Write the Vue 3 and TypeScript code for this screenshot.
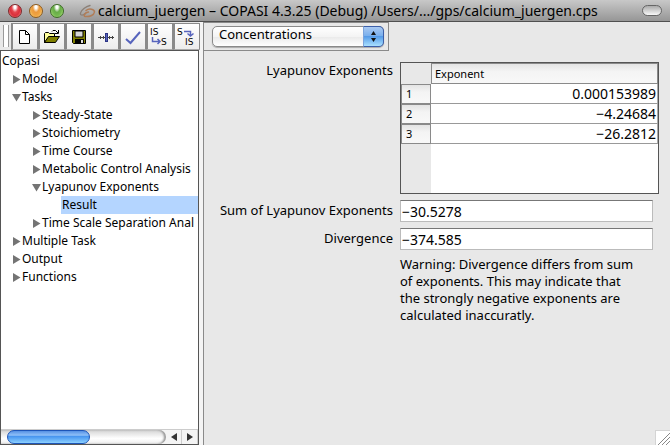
<script setup lang="ts">
import { ref } from 'vue'

interface TreeNode {
  label: string
  depth: number
  state: 'open' | 'closed' | 'leaf'
}

const nodes: TreeNode[] = [
  { label: 'Copasi', depth: 0, state: 'leaf' },
  { label: 'Model', depth: 1, state: 'closed' },
  { label: 'Tasks', depth: 1, state: 'open' },
  { label: 'Steady-State', depth: 2, state: 'closed' },
  { label: 'Stoichiometry', depth: 2, state: 'closed' },
  { label: 'Time Course', depth: 2, state: 'closed' },
  { label: 'Metabolic Control Analysis', depth: 2, state: 'closed' },
  { label: 'Lyapunov Exponents', depth: 2, state: 'open' },
  { label: 'Result', depth: 3, state: 'leaf' },
  { label: 'Time Scale Separation Anal', depth: 2, state: 'closed' },
  { label: 'Multiple Task', depth: 1, state: 'closed' },
  { label: 'Output', depth: 1, state: 'closed' },
  { label: 'Functions', depth: 1, state: 'closed' },
]

const selected = ref('Result')
const framework = ref('Concentrations')
const exponents = ['0.000153989', '−4.24684', '−26.2812']
const sum = ref('−30.5278')
const divergence = ref('−374.585')
</script>

<template>
  <div class="window">
    <header class="titlebar">
      <div class="lights">
        <button class="light red" aria-label="Close"></button>
        <button class="light amber" aria-label="Minimize"></button>
        <button class="light green" aria-label="Zoom"></button>
      </div>
      <svg class="doc-icon" width="17" height="14" viewBox="0 0 17 14" fill="none" stroke-linecap="round">
        <path d="M11 1.500C7 2.500 2 6 1.500 9C1 12 4.500 11.500 6.500 9.500" stroke="#8b8078" stroke-width="1.400" />
        <path d="M7 6.500C10 4 15.500 5 15.500 8C15 11.500 10 13 6.500 12.500C3.500 12 6 8.500 9.500 8" stroke="#b07d58" stroke-width="1.500" />
      </svg>
      <h1 class="title">calcium_juergen – COPASI 4.3.25 (Debug) /Users/.../gps/calcium_juergen.cps</h1>
      <button class="pill" aria-label="Toggle toolbar"></button>
    </header>

    <div class="body">
      <aside class="side">
        <div class="toolbar">
          <span class="grip"></span>
          <button class="tool" aria-label="New">
            <svg width="24" height="24" viewBox="0 0 24 24">
              <path d="M6.500 5.500H12.500L16.500 9.500V18.500H6.500Z" fill="#fff" stroke="#000" />
              <path d="M12.500 5.500V9.500H16.500" fill="none" stroke="#000" />
            </svg>
          </button>
          <button class="tool" aria-label="Open">
            <svg width="24" height="24" viewBox="0 0 24 24">
              <path d="M4.500 17.500V8.500L5.500 7.500H8.500L9.500 8.500H14.500V11.500H9.500Z" fill="#ffff9c" stroke="#000" />
              <path d="M4.500 17.500L8.500 11.500H19.500L15.500 17.500Z" fill="#808000" stroke="#000" />
              <path d="M12 6.500L13 5.500H15.500L18 8M18.500 5V8.500H15" fill="none" stroke="#000" />
            </svg>
          </button>
          <button class="tool" aria-label="Save">
            <svg width="24" height="24" viewBox="0 0 24 24">
              <path d="M5.500 5.500H18.500V18.500H6.500L5.500 17.500Z" fill="#808000" stroke="#000" />
              <path d="M8 6H16V12H8Z" fill="#d8d8d8" stroke="#000" />
              <path d="M8 14H17V18H8Z" fill="#000" />
              <path d="M14 15H16V18H14Z" fill="#ddd" />
            </svg>
          </button>
          <button class="tool" aria-label="Sliders">
            <svg width="24" height="24" viewBox="0 0 24 24">
              <path d="M4 12.500H20M6.500 11V14M9.500 11V14M15.500 11V14M18.500 11V14" stroke="#444" />
              <path d="M11 8H14V17H11Z" fill="#2b3488" />
              <path d="M12 9H13V16H12Z" fill="#5964b4" />
            </svg>
          </button>
          <button class="tool" aria-label="Check model">
            <svg width="24" height="24" viewBox="0 0 24 24">
              <path d="M5 14L9.500 18L19 7" fill="none" stroke="#5764bd" stroke-width="2" />
            </svg>
          </button>
          <button class="tool" aria-label="Update initial state">
            <svg width="24" height="24" viewBox="0 0 24 24">
              <text x="2" y="10" class="glyph">IS</text>
              <text x="13" y="20" class="glyph">S</text>
              <path d="M4.500 12V16.500H12M9.500 14L12 16.500L9.500 19" fill="none" stroke="#5764bd" stroke-width="1.500" />
            </svg>
          </button>
          <button class="tool" aria-label="Use current state">
            <svg width="24" height="24" viewBox="0 0 24 24">
              <text x="2" y="10" class="glyph">S</text>
              <text x="10" y="20" class="glyph">IS</text>
              <path d="M9 6.500H15.500V10.500M12.500 8.500L15.500 11L18.500 8.500" fill="none" stroke="#5764bd" stroke-width="1.500" />
            </svg>
          </button>
        </div>

        <nav class="tree" aria-label="Model tree">
          <ul class="nodes">
            <li v-for="node in nodes" :key="node.label" :class="['node', 'd' + node.depth]">
              <svg v-if="node.state === 'closed'" class="twist" width="9" height="10" viewBox="0 0 9 10">
                <path d="M1 1L8.500 5.500L1 10Z" fill="#747474" />
              </svg>
              <svg v-else-if="node.state === 'open'" class="twist" width="9" height="10" viewBox="0 0 9 10">
                <path d="M0 2H9L4.500 9.500Z" fill="#747474" />
              </svg>
              <button :class="['node-label', { active: selected === node.label }]" @click="selected = node.label">
                {{ node.label }}
              </button>
            </li>
          </ul>
          <div class="scroll">
            <div class="track"><span class="thumb"></span></div>
            <button class="step" aria-label="Scroll left">
              <svg width="6" height="8" viewBox="0 0 6 8"><path d="M6 0V8L0 4Z" fill="#333" /></svg>
            </button>
            <button class="step" aria-label="Scroll right">
              <svg width="6" height="8" viewBox="0 0 6 8"><path d="M0 0V8L6 4Z" fill="#333" /></svg>
            </button>
          </div>
        </nav>
      </aside>

      <main class="main">
        <div class="picker">
          <div class="popup">
            <select v-model="framework" class="select" aria-label="Framework">
              <option>Concentrations</option>
              <option>Particle Numbers</option>
            </select>
            <span class="cap">
              <svg width="7" height="13" viewBox="0 0 7 13">
                <path d="M3.500 1L6 5H1ZM3.500 12L6 8H1Z" fill="#111" />
              </svg>
            </span>
          </div>
        </div>

        <form class="form" @submit.prevent>
          <span id="exp-label" class="label">Lyapunov Exponents</span>
          <div class="frame">
            <table class="grid" aria-labelledby="exp-label">
              <thead>
                <tr>
                  <td class="corner"></td>
                  <th class="head" scope="col">Exponent</th>
                </tr>
              </thead>
              <tbody>
                <tr v-for="(value, i) in exponents" :key="i">
                  <th class="row-head" scope="row">{{ i + 1 }}</th>
                  <td class="cell">{{ value }}</td>
                </tr>
              </tbody>
            </table>
          </div>

          <label class="label field-label" for="sum">Sum of Lyapunov Exponents</label>
          <input id="sum" v-model="sum" class="field" type="text" readonly />

          <label class="label field-label" for="divergence">Divergence</label>
          <input id="divergence" v-model="divergence" class="field" type="text" readonly />

          <p class="warning">
            Warning: Divergence differs from sum of exponents. This may indicate that the strongly negative
            exponents are calculated inaccuratly.
          </p>
        </form>

        <svg class="resize" width="15" height="15" viewBox="0 0 15 15">
          <path d="M0 0H15V15H0Z" fill="#d4d4d4" />
          <path d="M1 1H15V15H1Z" fill="#fff" />
          <path d="M3 15L15 3M7 15L15 7M11 15L15 11" stroke="#888" />
        </svg>
      </main>
    </div>
  </div>
</template>

<style>
body {
  margin: 0;
  background: #e8e8e8;
}
</style>

<style scoped>
.window {
  display: flex;
  flex-direction: column;
  height: 100vh;
  overflow: hidden;
  font-family: "Noto Sans", "Open Sans", sans-serif;
  font-size: 13px;
  color: #000;
  background: #e8e8e8;
}
.window *,
.window {
  box-sizing: border-box;
}
button {
  padding: 0;
  border: 0;
  font: inherit;
  color: inherit;
  background: none;
}
.titlebar {
  display: flex;
  flex: none;
  align-items: center;
  height: 22px;
  padding: 0 8px;
  border-bottom: 1px solid #505050;
  background: linear-gradient(#c8c8c8, #969696);
}
.lights {
  display: flex;
  gap: 7px;
  width: 71px;
}
.light {
  width: 14px;
  height: 14px;
  border: 1px solid #555;
  border-radius: 50%;
}
.red {
  border-color: #7c2a2c;
  background: radial-gradient(ellipse at 50% 15%, #fff 0 12%, #e5474f 38%, #d92f3a 60%, #ff9a94);
}
.amber {
  border-color: #8a5a20;
  background: radial-gradient(ellipse at 50% 15%, #fff 0 12%, #eb9a3c 38%, #efa443 60%, #ffe78a);
}
.green {
  border-color: #3c6a26;
  background: radial-gradient(ellipse at 50% 15%, #fff 0 12%, #68ac48 38%, #74b850 60%, #c4f38c);
}
.doc-icon {
  flex: none;
  margin-right: 2px;
}
.title {
  flex: 1;
  margin: 0;
  font-size: 14px;
  font-weight: 400;
  line-height: 20px;
  white-space: nowrap;
  overflow: hidden;
}
.pill {
  flex: none;
  width: 20px;
  height: 11px;
  border: 1px solid #666;
  border-radius: 6px;
  background: linear-gradient(#aaa, #f8f8f8);
}
.body {
  display: flex;
  flex: 1;
  min-height: 0;
}
.side {
  display: flex;
  flex: none;
  flex-direction: column;
  width: 204px;
  padding-right: 4px;
  border-right: 1px solid #8a8a8a;
  background: #f4f4f4;
}
.toolbar {
  display: flex;
  flex: none;
  height: 28px;
  padding-top: 1px;
  background: #e8e8e8;
}
.grip {
  flex: none;
  width: 6px;
  height: 22px;
  margin: 2px 2px 0 3px;
  border: solid #999;
  border-width: 0 1px;
  background: #fff;
}
.tool {
  display: flex;
  flex: 1;
  align-items: center;
  justify-content: center;
  border: 1px solid #8a8a8a;
  border-left-width: 2px;
  border-bottom-color: #aaa;
  background: linear-gradient(#fff, #ececec);
}
.tool svg {
  flex: none;
}
.glyph {
  font-family: "DejaVu Sans", sans-serif;
  font-size: 9px;
}
.tree {
  display: flex;
  flex: 1;
  flex-direction: column;
  min-height: 0;
  border: 1px solid #555;
  background: #fff;
}
.nodes {
  flex: 1;
  min-height: 0;
  margin: 0;
  padding: 1px 0;
  overflow: hidden;
  list-style: none;
  font-size: 12px;
}
.node {
  display: flex;
  align-items: center;
  height: 18px;
}
.d1 {
  padding-left: 11px;
}
.d2 {
  padding-left: 31px;
}
.d3 {
  padding-left: 60px;
}
.twist {
  flex: none;
}
.node-label {
  flex: 1;
  min-width: 0;
  height: 18px;
  padding-left: 1px;
  overflow: hidden;
  line-height: 18px;
  text-align: left;
  white-space: nowrap;
}
.active {
  background: #b4d5ff;
}
.scroll {
  display: flex;
  flex: none;
  height: 15px;
  border-top: 1px solid #ccc;
  background: #f4f4f4;
}
.track {
  flex: 1;
  padding-left: 6px;
  border-radius: 0 8px 8px 0;
  box-shadow: inset -2px 0 2px #999;
  background: linear-gradient(#d4d4d4, #fff 60%, #eee);
}
.thumb {
  display: block;
  width: 52%;
  height: 14px;
  border: 1px solid #1d55b8;
  border-radius: 7px;
  background: linear-gradient(#5590e4, #8fc0f8 35%, #4795ef 45%, #8cd0ff);
}
.step {
  display: flex;
  align-items: center;
  justify-content: center;
  width: 16px;
  border-right: 1px solid #ccc;
}
.main {
  display: flex;
  flex: 1;
  flex-direction: column;
  align-items: flex-start;
  min-width: 0;
}
.picker {
  flex: none;
  height: 29px;
  padding: 3px 4px 0 8px;
  border: 1px solid #8a8a8a;
  border-left: 0;
}
.popup {
  display: flex;
  position: relative;
  width: 172px;
  height: 21px;
}
.select {
  flex: 1;
  padding: 0 28px 6px 6px;
  border: 1px solid #8a8a8a;
  border-radius: 5px;
  appearance: none;
  font: inherit;
  line-height: 14px;
  color: #000;
  background: linear-gradient(#fff, #f4f4f4 50%, #e9e9e9 50%, #fff);
  box-shadow: 0 1px 1px #aaa;
}
.cap {
  display: flex;
  position: absolute;
  top: 0;
  right: 0;
  align-items: center;
  justify-content: center;
  width: 21px;
  height: 21px;
  border: 1px solid #3c5fa8;
  border-left-color: #7ca4dc;
  border-radius: 0 5px 5px 0;
  background: linear-gradient(#a9c9f2, #78aeec 48%, #559be8 50%, #a9e0ff);
  pointer-events: none;
}
.form {
  display: grid;
  grid-template-columns: 189px 1fr;
  column-gap: 7px;
  row-gap: 6px;
  align-self: stretch;
  padding: 11px 11px 0 0;
}
.label {
  line-height: 16px;
  text-align: right;
  white-space: nowrap;
}
.field-label {
  line-height: 20px;
}
.frame {
  height: 132px;
  border: 1px solid #555;
  background: linear-gradient(90deg, #e8e8e8 30px, #fff 30px);
}
.grid {
  width: 100%;
  table-layout: fixed;
  border-spacing: 0;
}
.grid td,
.grid th {
  height: 20px;
  padding: 0;
  line-height: 18px;
}
.grid .corner {
  width: 30px;
  height: 21px;
  background: #e8e8e8;
}
.grid .head,
.grid .row-head {
  border: 1px solid #8a8a8a;
  font-size: 11px;
  font-weight: 400;
  text-align: left;
  background: linear-gradient(#e4e4e4, #f4f4f4 40%, #f8f8f8);
}
.grid .head {
  padding-left: 3px;
}
.grid .row-head {
  padding-left: 4px;
}
.grid .cell {
  padding-right: 1px;
  border-right: 1px solid #aaa;
  border-bottom: 1px solid #999;
  font-size: 14px;
  text-align: right;
  background: #fff;
}
.field {
  width: calc(100% - 6px);
  height: 22px;
  padding: 0 1px;
  border: 1px solid #bbb;
  border-top-color: #777;
  outline: 0;
  font: inherit;
  font-size: 14px;
  color: #000;
  background: #fff;
}
.warning {
  grid-column: 2;
  margin: 0;
  padding-right: 18px;
  line-height: 17px;
}
.resize {
  flex: none;
  align-self: flex-end;
  margin-top: auto;
}
</style>
